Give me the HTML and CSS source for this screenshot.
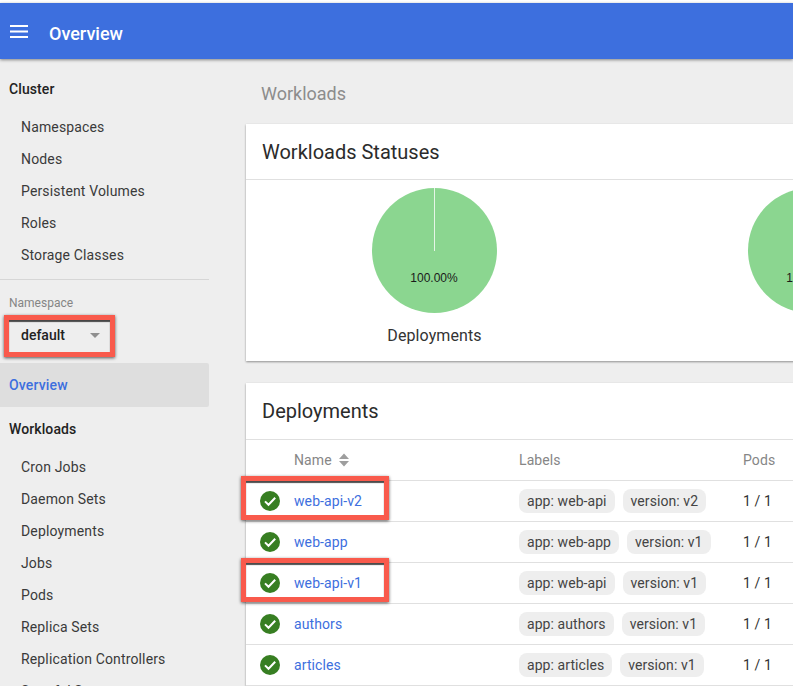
FILE: index.html
```html
<!DOCTYPE html>
<html>
<head>
    <title>Overview - Kubernetes Dashboard</title>
    <link rel="stylesheet" href="styles.css">
</head>
<body>
    <header class="topbar">
        <svg class="menu-icon" width="18" height="13" viewBox="0 0 18 13">
            <rect y="0" width="18" height="2" fill="#fff"/>
            <rect y="5.5" width="18" height="2" fill="#fff"/>
            <rect y="11" width="18" height="2" fill="#fff"/>
        </svg>
        <span class="topbar-title">Overview</span>
    </header>

    <div class="layout">
        <nav class="sidebar">
            <div class="nav-head nav-head-first">Cluster</div>
            <a class="nav-item">Namespaces</a>
            <a class="nav-item">Nodes</a>
            <a class="nav-item">Persistent Volumes</a>
            <a class="nav-item">Roles</a>
            <a class="nav-item">Storage Classes</a>

            <div class="nav-divider"></div>

            <div class="ns-label">Namespace</div>
            <div class="ns-select">
                <span>default</span>
                <span class="ns-arrow"></span>
                <div class="highlight"></div>
            </div>

            <a class="nav-active">Overview</a>

            <div class="nav-head">Workloads</div>
            <a class="nav-item">Cron Jobs</a>
            <a class="nav-item">Daemon Sets</a>
            <a class="nav-item">Deployments</a>
            <a class="nav-item">Jobs</a>
            <a class="nav-item">Pods</a>
            <a class="nav-item">Replica Sets</a>
            <a class="nav-item">Replication Controllers</a>
            <a class="nav-item">Stateful Sets</a>
        </nav>

        <main class="content">
            <div class="crumb">Workloads</div>

            <section class="card card-status">
                <h2 class="card-title">Workloads Statuses</h2>
                <div class="charts">
                    <div class="chart">
                        <div class="pie"><span class="pie-line"></span><span class="pie-value">100.00%</span></div>
                        <div class="chart-name">Deployments</div>
                    </div>
                    <div class="chart">
                        <div class="pie"><span class="pie-line"></span><span class="pie-value">100.00%</span></div>
                    </div>
                </div>
            </section>

            <section class="card">
                <h2 class="card-title card-title-tall">Deployments</h2>
                <div class="row row-head">
                    <span></span>
                    <span class="col-name">Name
                        <svg class="sort-icon" width="12" height="14" viewBox="0 0 12 14">
                            <path d="M6 0.5 L11 6 L1 6 Z M1 8 L11 8 L6 13.5 Z" fill="#9e9e9e"/>
                        </svg>
                    </span>
                    <span>Labels</span>
                    <span>Pods</span>
                </div>

                <div class="row">
                    <svg class="ok-icon" width="20" height="20" viewBox="0 0 20 20"><circle cx="10" cy="10" r="10" fill="#377e22"/><path d="M5 10.4 L8.5 13.8 L15.2 6.8" fill="none" stroke="#fff" stroke-width="2"/></svg>
                    <a class="link">web-api-v2</a>
                    <span class="chips"><span class="chip">app: web-api</span><span class="chip">version: v2</span></span>
                    <span class="pods">1 / 1</span>
                    <div class="highlight highlight-row"></div>
                </div>
                <div class="row">
                    <svg class="ok-icon" width="20" height="20" viewBox="0 0 20 20"><circle cx="10" cy="10" r="10" fill="#377e22"/><path d="M5 10.4 L8.5 13.8 L15.2 6.8" fill="none" stroke="#fff" stroke-width="2"/></svg>
                    <a class="link">web-app</a>
                    <span class="chips"><span class="chip">app: web-app</span><span class="chip">version: v1</span></span>
                    <span class="pods">1 / 1</span>
                </div>
                <div class="row">
                    <svg class="ok-icon" width="20" height="20" viewBox="0 0 20 20"><circle cx="10" cy="10" r="10" fill="#377e22"/><path d="M5 10.4 L8.5 13.8 L15.2 6.8" fill="none" stroke="#fff" stroke-width="2"/></svg>
                    <a class="link">web-api-v1</a>
                    <span class="chips"><span class="chip">app: web-api</span><span class="chip">version: v1</span></span>
                    <span class="pods">1 / 1</span>
                    <div class="highlight highlight-row"></div>
                </div>
                <div class="row">
                    <svg class="ok-icon" width="20" height="20" viewBox="0 0 20 20"><circle cx="10" cy="10" r="10" fill="#377e22"/><path d="M5 10.4 L8.5 13.8 L15.2 6.8" fill="none" stroke="#fff" stroke-width="2"/></svg>
                    <a class="link">authors</a>
                    <span class="chips"><span class="chip">app: authors</span><span class="chip">version: v1</span></span>
                    <span class="pods">1 / 1</span>
                </div>
                <div class="row">
                    <svg class="ok-icon" width="20" height="20" viewBox="0 0 20 20"><circle cx="10" cy="10" r="10" fill="#377e22"/><path d="M5 10.4 L8.5 13.8 L15.2 6.8" fill="none" stroke="#fff" stroke-width="2"/></svg>
                    <a class="link">articles</a>
                    <span class="chips"><span class="chip">app: articles</span><span class="chip">version: v1</span></span>
                    <span class="pods">1 / 1</span>
                </div>
            </section>
        </main>
    </div>
</body>
</html>
```

FILE: styles.css
```css
html, body {
    height: 100%;
    overflow: hidden;
}
body {
    margin: 0;
    padding-top: 3px;
    box-sizing: border-box;
    background: #eeeeee;
    font-family: Roboto, "Liberation Sans", sans-serif;
    font-size: 14px;
    color: #333;
    box-shadow: inset 0 3px 0 #fff;
}

/* top bar */
.topbar {
    height: 56px;
    display: flex;
    align-items: center;
    background: #3d6fde;
    color: white;
    box-shadow: 0 1px 3px rgba(0,0,0,0.45);
    position: relative;
    z-index: 2;
}
.menu-icon {
    margin-left: 10px;
    flex: none;
}
.topbar-title {
    margin-left: 21px;
    margin-top: 4px;
    font-size: 18px;
    font-weight: 500;
}

.layout {
    display: flex;
}

/* sidebar */
.sidebar {
    width: 209px;
    flex: none;
}
.nav-head {
    height: 32px;
    line-height: 32px;
    padding-left: 9px;
    margin-top: 6px;
    margin-bottom: 6px;
    font-weight: 500;
    letter-spacing: 0.1px;
    color: #222;
}
.nav-head-first {
    margin-top: 14px;
}
.nav-item {
    display: block;
    height: 32px;
    line-height: 32px;
    padding-left: 21px;
    letter-spacing: 0.15px;
    color: #3a3a3a;
    white-space: nowrap;
}
.nav-divider {
    height: 1px;
    margin-top: 8px;
    background: #d6d6d6;
}
.ns-label {
    margin-top: 16px;
    padding-left: 9px;
    height: 15px;
    line-height: 15px;
    font-size: 12px;
    color: #858585;
}
.ns-select {
    position: relative;
    width: 83px;
    height: 32px;
    margin: 8px 0 0 9px;
    padding-left: 12px;
    display: flex;
    align-items: center;
    justify-content: space-between;
    font-weight: 500;
    color: #222;
}
.ns-arrow {
    margin-right: 4px;
    border-left: 5px solid transparent;
    border-right: 5px solid transparent;
    border-top: 5px solid #8f8f8f;
}
.nav-active {
    display: block;
    height: 44px;
    line-height: 44px;
    margin-top: 12px;
    padding-left: 9px;
    background: #dedede;
    border-radius: 0 2px 2px 0;
    color: #3d6fde;
    font-weight: 500;
    letter-spacing: 0.15px;
}

/* red annotation boxes */
.highlight {
    position: absolute;
    border: 5px solid #f95a4c;
    box-sizing: border-box;
    box-shadow: 0 1px 3px rgba(0,0,0,0.65), inset 0 2px 1px rgba(0,0,0,0.7);
    left: -5px;
    top: -4px;
    width: 111px;
    height: 42px;
}
.highlight-row {
    left: -5px;
    top: -5px;
    width: 148px;
    height: 44px;
}

/* main column */
.content {
    flex: none;
    width: 590px;
    margin-left: 37px;
}
.crumb {
    height: 65px;
    line-height: 70px;
    padding-left: 15px;
    font-size: 18px;
    color: #8c8c8c;
}
.card {
    background: white;
    box-shadow: 0 1px 2px rgba(0,0,0,0.4);
    margin-bottom: 22px;
}
.card-status {
    height: 237px;
}
.card-title {
    margin: 0;
    height: 55px;
    line-height: 56px;
    padding-left: 16px;
    font-size: 20px;
    font-weight: 400;
    color: #2b2b2b;
    border-bottom: 1px solid #e0e0e0;
}
.card-title-tall {
    height: 56px;
}

/* pies */
.charts {
    display: flex;
    padding: 8px 0 0 126px;
    gap: 251px;
}
.chart {
    width: 125px;
    flex: none;
}
.pie {
    position: relative;
    width: 125px;
    height: 125px;
    border-radius: 50%;
    background: #8bd690;
}
.pie-line {
    position: absolute;
    left: 62px;
    top: 0;
    width: 1px;
    height: 63px;
    background: #e6f5e7;
}
.pie-value {
    position: absolute;
    left: -1px;
    right: 0;
    top: 83px;
    text-align: center;
    font-family: "Liberation Sans", Arial, sans-serif;
    font-size: 12px;
    color: #1a1a1a;
}
.chart-name {
    margin-top: 13px;
    text-align: center;
    font-size: 16px;
    letter-spacing: 0.1px;
    color: #333;
}

/* deployments table */
.row {
    position: relative;
    display: grid;
    grid-template-columns: 48px 225px 224px 50px;
    align-items: center;
    height: 40px;
    border-bottom: 1px solid #e0e0e0;
    white-space: nowrap;
}
.row .ok-icon {
    margin-left: 14px;
}
.row-head {
    letter-spacing: 0.1px;
    color: #868686;
}
.col-name {
    display: flex;
    align-items: center;
    gap: 6px;
}
.link {
    color: #3d6fde;
    letter-spacing: 0.1px;
}
.chips {
    display: flex;
    gap: 8px;
}
.chip {
    height: 24px;
    line-height: 24px;
    padding: 0 8px;
    background: #eeeeee;
    border-radius: 8px;
    font-size: 14px;
    letter-spacing: 0.07px;
    color: #444;
}
.pods {
    letter-spacing: 0.1px;
}
```
